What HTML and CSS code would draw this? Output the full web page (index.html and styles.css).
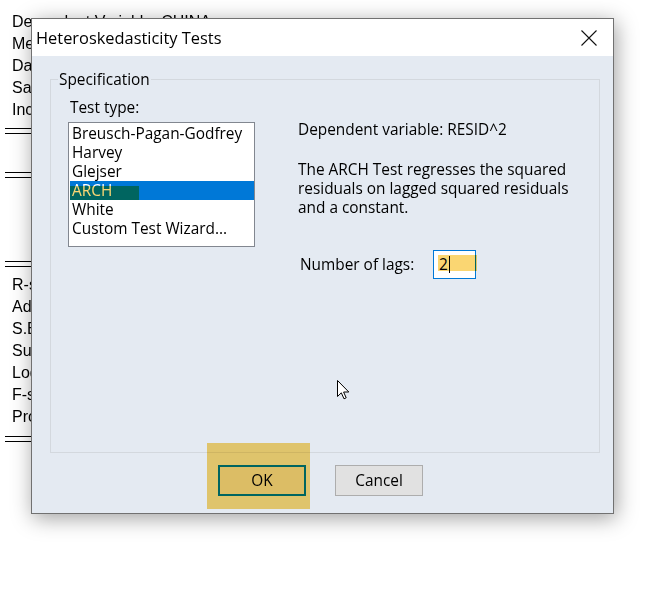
FILE: index.html
```html
<!DOCTYPE html>
<html>
<head>
<meta charset="utf-8">
<link rel="stylesheet" href="styles.css">
</head>
<body>
<div class="sheet">
  <div class="row">Dependent Variable: CHINA</div>
  <div class="row">Method: Least Squares</div>
  <div class="row">Date: 05/12/21   Time: 10:32</div>
  <div class="row">Sample: 1990 2019</div>
  <div class="row">Included observations: 30</div>
  <div class="rule rule-a"></div>
  <div class="gap-head"></div>
  <div class="rule"></div>
  <div class="gap-coef"></div>
  <div class="rule"></div>
  <div class="stats">
    <div class="row">R-squared</div>
    <div class="row">Adjusted R-squared</div>
    <div class="row">S.E. of regression</div>
    <div class="row">Sum squared resid</div>
    <div class="row">Log likelihood</div>
    <div class="row">F-statistic</div>
    <div class="row">Prob(F-statistic)</div>
  </div>
  <div class="rule rule-end"></div>
</div>

<div class="dialog">
  <div class="titlebar">
    <span class="title">Heteroskedasticity Tests</span>
    <svg class="close" width="16" height="16" viewBox="0 0 16 16"><path d="M0.5 0.5 L15.5 15.5 M15.5 0.5 L0.5 15.5" stroke="#111" stroke-width="1.1" fill="none"/></svg>
  </div>
  <div class="body">
    <fieldset class="group">
      <legend>Specification</legend>
      <div class="cols">
        <div class="left">
          <div class="label">Test type:</div>
          <div class="listbox">
            <div class="item">Breusch-Pagan-Godfrey</div>
            <div class="item">Harvey</div>
            <div class="item">Glejser</div>
            <div class="item selected">ARCH</div>
            <div class="item">White</div>
            <div class="item">Custom Test Wizard...</div>
            <span class="hl hl-arch"></span>
          </div>
        </div>
        <div class="right">
          <div class="dep">Dependent variable: RESID^2</div>
          <p class="desc">The ARCH Test regresses the squared residuals on lagged squared residuals and a constant.</p>
          <div class="lags">
            <span class="lags-label">Number of lags:</span>
            <span class="input"><span class="val">2</span><span class="caret"></span><span class="hl hl-input"></span></span>
          </div>
        </div>
      </div>
    </fieldset>
    <div class="buttons">
      <button class="btn btn-ok">OK</button>
      <button class="btn">Cancel</button>
    </div>
    <span class="hl hl-ok"></span>
    <svg class="cursor" width="13" height="20" viewBox="0 0 13 20"><path d="M0.5 0.5 L0.5 16.5 L4.3 12.8 L7 18.8 L9.2 17.8 L6.6 12 L11.8 12 Z" fill="#fff" stroke="#000" stroke-width="1" stroke-linejoin="miter"/></svg>
  </div>
</div>
</body>
</html>
```

FILE: styles.css
```css
html, body {
  margin: 0;
  padding: 0;
  background: #fff;
}
.sheet {
  padding: 11px 0 0 5px;
  font-family: "Liberation Sans", Arial, sans-serif;
  font-size: 16px;
  color: #000;
}
.sheet .row {
  line-height: 22px;
  padding-left: 7px;
  white-space: nowrap;
}
.rule {
  height: 4px;
  border-top: 1px solid #000;
  border-bottom: 1px solid #000;
  width: 600px;
}
.rule-a { margin-top: 7px; }
.gap-head { height: 38px; }
.gap-coef { height: 83px; }
.stats { margin-top: 7px; }
.rule-end { margin-top: 8px; }

.dialog {
  position: absolute;
  left: 31px;
  top: 18px;
  width: 581px;
  height: 494px;
  border: 1px solid #717171;
  background: #e4eaf2;
  box-shadow: 2px 4px 20px rgba(0,0,0,0.38);
  font-family: "Open Sans", "Noto Sans", sans-serif;
  font-size: 15.4px;
  color: #000;
  display: flex;
  flex-direction: column;
}
.titlebar {
  height: 37px;
  background: #fff;
  display: flex;
  align-items: center;
  padding-left: 4px;
  padding-right: 16px;
  flex-shrink: 0;
}
.title {
  flex: 1;
  font-size: 16.4px;
  line-height: 20px;
}
.close { display: block; }

.body {
  position: relative;
  flex: 1;
  padding: 14px 13px 0 18px;
}
.group {
  margin: 0;
  padding: 0;
  border: 1px solid #d3d8de;
  height: 383px;
  box-sizing: border-box;
}
.group legend {
  margin-left: 7px;
  padding: 0 1px;
  line-height: 19px;
}
.cols {
  display: flex;
  padding-left: 17px;
}
.left { width: 187px; }
.label {
  line-height: 19px;
  padding-left: 2px;
  margin-top: 9px;
  margin-bottom: 5px;
}
.listbox {
  position: relative;
  border: 1px solid #828790;
  background: #fff;
  padding: 1px 0 0 1px;
  box-sizing: border-box;
  height: 125px;
}
.item {
  line-height: 20px;
  height: 19px;
  padding-left: 2px;
  width: 184px;
  box-sizing: border-box;
  white-space: nowrap;
}
.item.selected {
  background: #0078d7;
  color: #fff;
}
.hl {
  position: absolute;
  background: #fad672;
  mix-blend-mode: multiply;
  pointer-events: none;
}
.hl-arch {
  left: 1px;
  top: 63px;
  width: 69px;
  height: 14px;
}
.right {
  margin-left: 43px;
  padding-top: 31px;
}
.dep { line-height: 19px; white-space: nowrap; }
.desc {
  margin: 21px 0 0;
  line-height: 19px;
  width: 276px;
}
.lags {
  display: flex;
  align-items: center;
  margin-top: 33px;
}
.lags-label {
  width: 135px;
  padding-left: 2px;
  box-sizing: border-box;
}
.input {
  position: relative;
  display: flex;
  align-items: center;
  width: 43px;
  height: 29px;
  box-sizing: border-box;
  border: 1px solid #0078d7;
  background: #fff;
  padding-left: 5px;
}
.val { line-height: 17px; }
.caret {
  width: 1px;
  height: 17px;
  background: #000;
  margin-left: 1px;
}
.hl-input {
  left: 4px;
  top: 4px;
  width: 39px;
  height: 16px;
}
.buttons {
  display: flex;
  gap: 29px;
  padding-left: 168px;
  margin-top: 12px;
}
.btn {
  width: 88px;
  height: 31px;
  background: #e1e1e1;
  border: 1px solid #adadad;
  font-family: inherit;
  font-size: 15.4px;
  color: #000;
  padding: 0;
}
.btn-ok {
  border: 2px solid #0078d7;
}
.hl-ok {
  left: 175px;
  top: 387px;
  width: 103px;
  height: 66px;
}
.cursor {
  position: absolute;
  left: 305px;
  top: 324px;
}
```
